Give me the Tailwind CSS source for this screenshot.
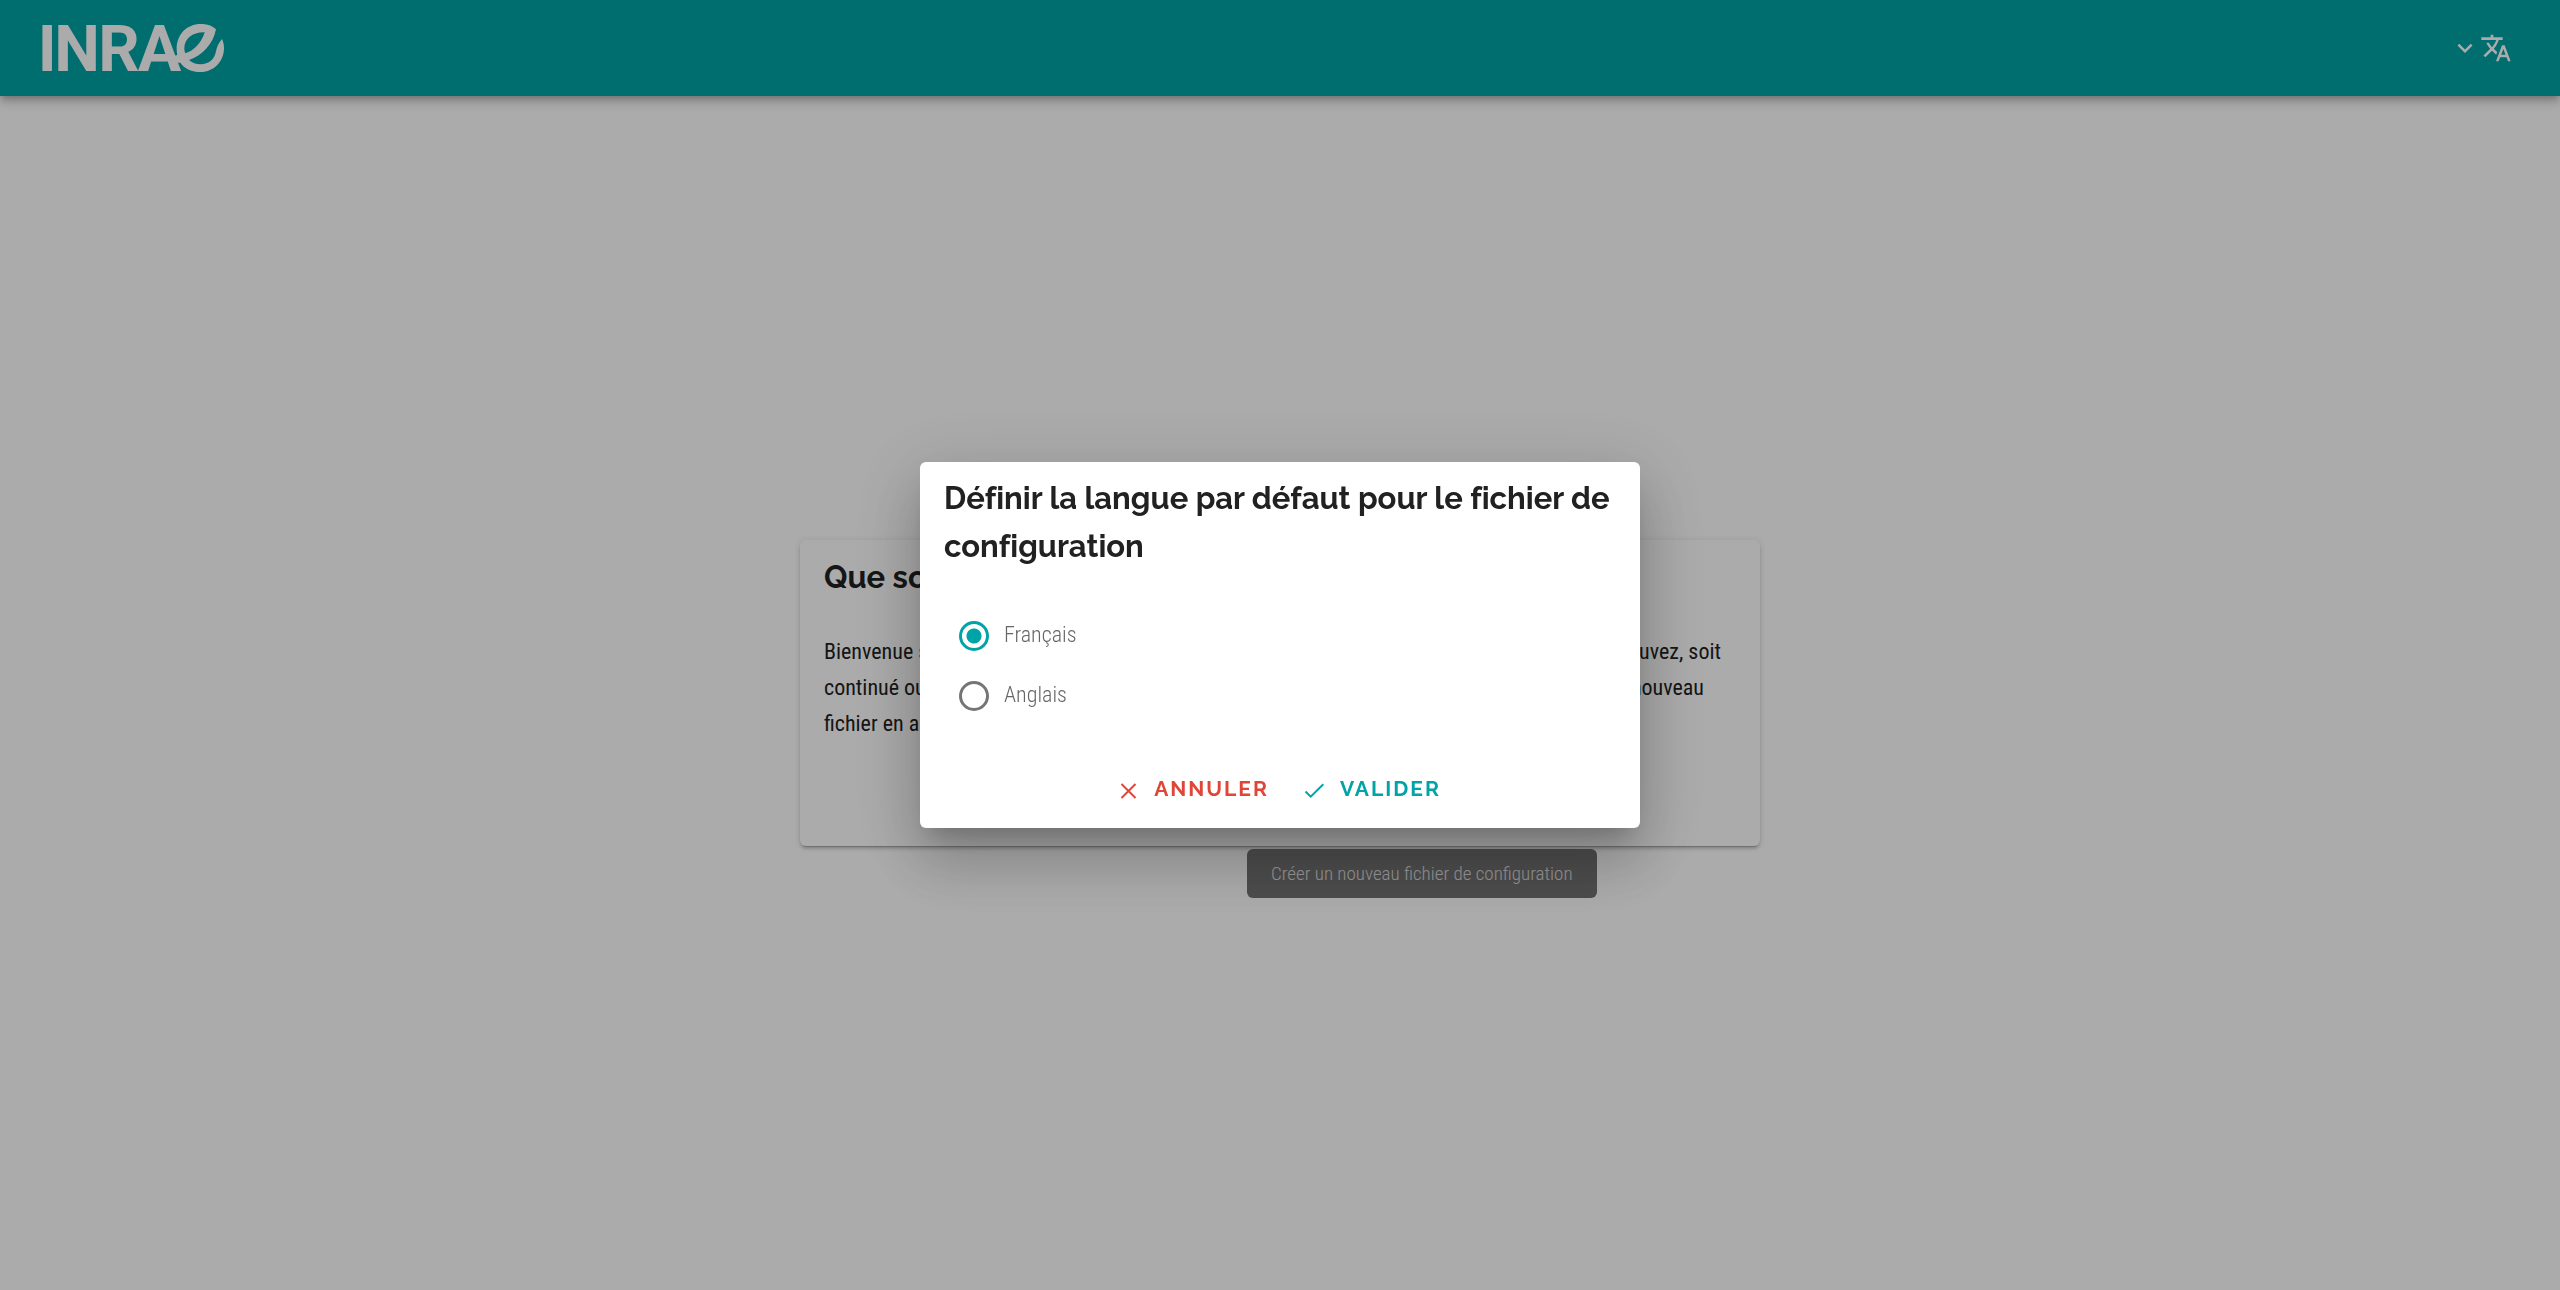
<!DOCTYPE html>
<html lang="fr">
<head>
<meta charset="utf-8">
<title>INRAE</title>
<script src="https://cdn.jsdelivr.net/npm/@tailwindcss/browser@4"></script>
</head>
<body class="flex min-h-screen flex-col bg-white font-['Roboto_Condensed','Open_Sans_Condensed',sans-serif] text-[#212121]">

<header class="relative flex h-24 items-center justify-between bg-[#00a3a6] pr-6 pl-[42px] text-white shadow-[0_3px_6px_-2px_rgb(0_0_0/0.2),0_6px_8px_0_rgb(0_0_0/0.14),0_2px_15px_0_rgb(0_0_0/0.12)]">
  <a href="#" aria-label="INRAE">
    <svg class="h-12 w-[182px] overflow-visible" viewBox="126 72 546 144" fill="currentColor" aria-hidden="true">
      <text x="113 163 295 413" y="213" class="font-['Roboto',sans-serif] text-[194px] font-bold">INRA</text>
      <path fill-rule="evenodd" d="M648 88C632 74 618 72 602 72C560 72 530 104 530 146C530 154 531 160 532 165L524 167L532 188L541 188C552 206 576 216 602 216C642 216 672 184 672 144C672 134 670 126 666 117C656 128 650 142 648 154C644 178 626 193 602 193C588 193 576 188 567 180C606 168 640 132 648 88ZM614 97C604 130 582 152 556 160C554 154 553 150 553 145C553 116 578 96 614 97Z"/>
    </svg>
  </a>
  <button type="button" aria-label="Changer de langue" class="flex h-[54px] items-center rounded-md pr-6 pl-[27px] shadow-[0_0_0_0_rgb(0_0_0/0.2),0_0_0_0_rgb(0_0_0/0.14)]">
    <svg class="size-[30px]" viewBox="0 0 24 24" fill="currentColor"><path d="M7.410 8.580 12 13.170l4.590-4.590L18 10l-6 6-6-6 1.410-1.420Z"/></svg>
    <svg class="size-8" viewBox="0 0 24 24" fill="currentColor"><path d="M12.870 15.070 10.330 12.560 10.360 12.530C12.100 10.590 13.340 8.360 14.070 6H17V4H10V2H8V4H1V6H12.170C11.500 7.920 10.440 9.750 9 11.350 8.070 10.320 7.300 9.190 6.690 8H4.690C5.420 9.630 6.420 11.170 7.670 12.560L2.580 17.580 4 19 9 14 12.110 17.110 12.870 15.070ZM18.500 10H16.500L12 22H14L15.120 19H19.870L21 22H23L18.500 10ZM15.880 17 17.500 12.670 19.120 17H15.880Z"/></svg>
  </button>
</header>

<main class="flex flex-1 items-center justify-center">
  <section class="relative w-full max-w-[960px] rounded-md bg-white px-6 py-3 shadow-[0_4px_1px_-3px_rgb(0_0_0/0.2),0_3px_3px_0_rgb(0_0_0/0.14),0_1px_7px_0_rgb(0_0_0/0.12)]">
    <h1 class="font-['Raleway','Lato',sans-serif] text-[31px] leading-[50px] font-bold [font-variant-ligatures:none]">Que souhaitez-vous faire&nbsp;?</h1>
    <p class="mt-8 mb-[38px] text-[22px] leading-9">
      <span class="flex max-w-[897px] justify-between"><span>Bienvenue sur l’outil de configuration.</span> <span>Vous pouvez, soit</span></span>
      <span class="flex max-w-[880px] justify-between"><span>continué ou reprendre</span> <span>soit créer un nouveau</span></span>
      <span class="block">fichier en appuyant sur le bouton.</span>
    </p>
    <div class="flex justify-center gap-3 font-['Raleway','Lato',sans-serif] text-[21px] font-bold tracking-[2px] text-[#00a3a6]">
      <button type="button" class="h-[54px] w-[272px] rounded-md uppercase shadow-[0_0_0_0_rgb(0_0_0/0.2),0_0_0_0_rgb(0_0_0/0.14)]">Continuer</button>
      <button type="button" aria-describedby="tip" class="h-[54px] w-[176px] rounded-md uppercase shadow-[0_0_0_0_rgb(0_0_0/0.2),0_0_0_0_rgb(0_0_0/0.14)]">Créer</button>
    </div>
    <div id="tip" role="tooltip" class="absolute top-[309px] left-[447px] rounded-md bg-[#727272] px-6 py-2 text-[19px] leading-[33px] font-light whitespace-nowrap text-[#e0e0e0]">Créer un nouveau fichier de configuration</div>
  </section>
</main>

<div class="fixed inset-0 flex items-center justify-center bg-black/33">
  <form role="dialog" aria-modal="true" aria-labelledby="dialog-title" class="w-full max-w-[720px] rounded-md bg-white py-3 shadow-[0_16px_22px_-10px_rgb(0_0_0/0.2),0_36px_57px_4px_rgb(0_0_0/0.14),0_14px_69px_12px_rgb(0_0_0/0.12)]">
    <h2 id="dialog-title" class="px-6 font-['Raleway','Lato',sans-serif] text-[31px] leading-[48px] font-bold [font-variant-ligatures:none]">Définir la langue par défaut pour le fichier de configuration</h2>
    <div class="my-9 px-[39px] text-[22px] font-light text-[#666]">
      <label class="flex h-[60px] items-center gap-[15px]">
        <input type="radio" name="lang" checked class="size-[30px] appearance-none rounded-full border-3 border-[#757575] checked:border-[#00a3a6] checked:bg-[radial-gradient(circle,#00a3a6_7px,transparent_8px)]">
        <span class="pb-1">Français</span>
      </label>
      <label class="flex h-[60px] items-center gap-[15px]">
        <input type="radio" name="lang" class="size-[30px] appearance-none rounded-full border-3 border-[#757575] checked:border-[#00a3a6]">
        <span class="pb-1">Anglais</span>
      </label>
    </div>
    <div class="flex justify-center gap-3 font-['Raleway','Lato',sans-serif] text-[21px] font-bold tracking-[2px]">
      <button type="button" class="flex h-[54px] items-center gap-3 rounded-md pr-3 pl-2 text-[#e04638] uppercase shadow-[0_0_0_0_rgb(0_0_0/0.2),0_0_0_0_rgb(0_0_0/0.14)]">
        <svg class="mt-1 size-[27px]" viewBox="0 0 27 27" fill="none" stroke="currentColor" stroke-width="2"><path d="M6.500 6 20.500 20M20.500 6 6.500 20"/></svg>
        <span class="pb-px">Annuler</span>
      </button>
      <button type="submit" class="flex h-[54px] items-center gap-3 rounded-md pr-3 pl-2 text-[#00a3a6] uppercase shadow-[0_0_0_0_rgb(0_0_0/0.2),0_0_0_0_rgb(0_0_0/0.14)]">
        <svg class="mt-1 size-[27px]" viewBox="0 0 27 27" fill="none" stroke="currentColor" stroke-width="2"><path d="M4.500 13.500 9.700 18.700 22.300 6.200"/></svg>
        <span class="pb-px">Valider</span>
      </button>
    </div>
  </form>
</div>
</body>
</html>
